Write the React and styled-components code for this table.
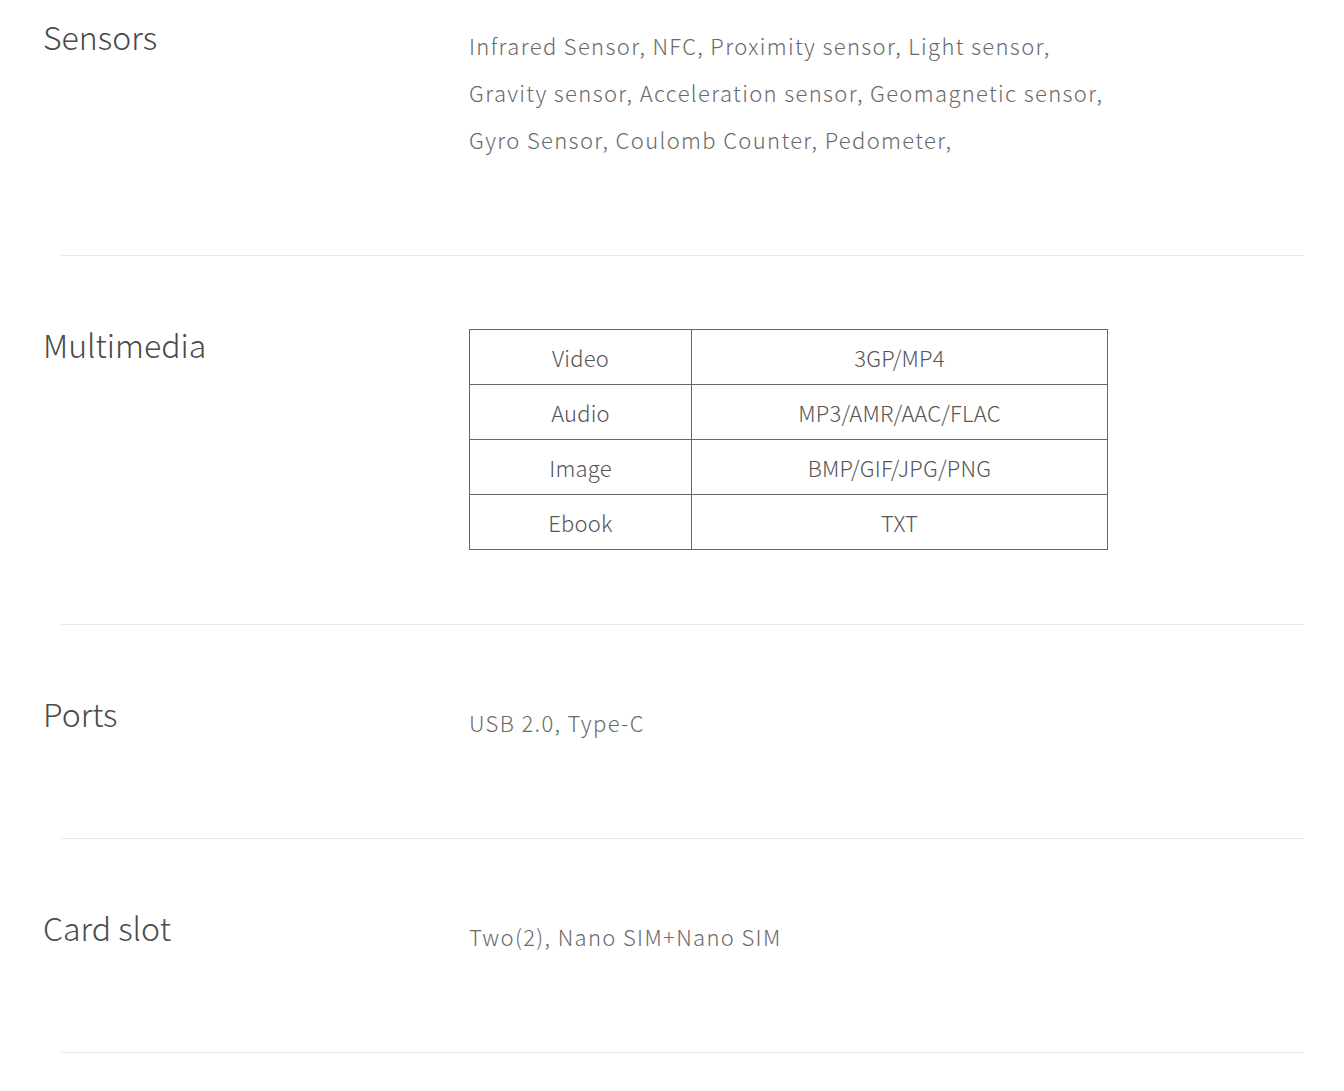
import React from 'react'
import styled, { createGlobalStyle } from 'styled-components'

const GlobalStyle = createGlobalStyle`
  html, body {
    margin: 0;
    padding: 0;
    background: #fff;
  }
  body {
    font-family: "Noto Sans CJK SC", "Noto Sans", sans-serif;
  }
`

const Page = styled.div`
  width: 1344px;
  padding: 0 40px 0 43px;
  box-sizing: border-box;
`

const Section = styled.section`
  display: grid;
  grid-template-columns: 426px 1fr;
  padding-top: ${({ first }) => (first ? '20px' : '72px')};
  padding-bottom: ${({ bottom }) => bottom || '92px'};
`

const Label = styled.h2`
  margin: 0;
  font-size: 32px;
  line-height: 32px;
  font-weight: 300;
  color: #4a4a4a;
`

const Content = styled.div`
  margin-top: 2px;
`

const Text = styled.p`
  margin: 0;
  font-size: 22px;
  line-height: 47px;
  font-weight: 300;
  letter-spacing: 1.35px;
  color: #6a6a6a;
`

const Divider = styled.hr`
  margin: 0 0 0 18px;
  border: 0;
  border-top: 1px solid #e8e8e8;
`

const Table = styled.table`
  width: 639px;
  margin-top: -1px;
  border-collapse: collapse;
`

const Cell = styled.td`
  width: ${({ wide }) => (wide ? 'auto' : '221px')};
  height: 54px;
  padding: 0;
  border: 1px solid #666;
  text-align: center;
  font-size: 22px;
  font-weight: 300;
  letter-spacing: 0.2px;
  color: #555;
`

const media = [
  ['Video', '3GP/MP4'],
  ['Audio', 'MP3/AMR/AAC/FLAC'],
  ['Image', 'BMP/GIF/JPG/PNG'],
  ['Ebook', 'TXT'],
]

const App = () => (
  <>
    <GlobalStyle />
    <Page>
      <Section first>
        <Label>Sensors</Label>
        <Content>
          <Text>Infrared Sensor, NFC, Proximity sensor, Light sensor,</Text>
          <Text>Gravity sensor, Acceleration sensor, Geomagnetic sensor,</Text>
          <Text>Gyro Sensor, Coulomb Counter, Pedometer,</Text>
        </Content>
      </Section>
      <Divider />

      <Section bottom="74px">
        <Label>Multimedia</Label>
        <Content>
          <Table>
            <tbody>
              {media.map(([kind, formats]) => (
                <tr key={kind}>
                  <Cell>{kind}</Cell>
                  <Cell wide>{formats}</Cell>
                </tr>
              ))}
            </tbody>
          </Table>
        </Content>
      </Section>
      <Divider />

      <Section>
        <Label>Ports</Label>
        <Content>
          <Text>USB 2.0, Type-C</Text>
        </Content>
      </Section>
      <Divider />

      <Section>
        <Label>Card slot</Label>
        <Content>
          <Text>Two(2), Nano SIM+Nano SIM</Text>
        </Content>
      </Section>
      <Divider />
    </Page>
  </>
)

export default App
